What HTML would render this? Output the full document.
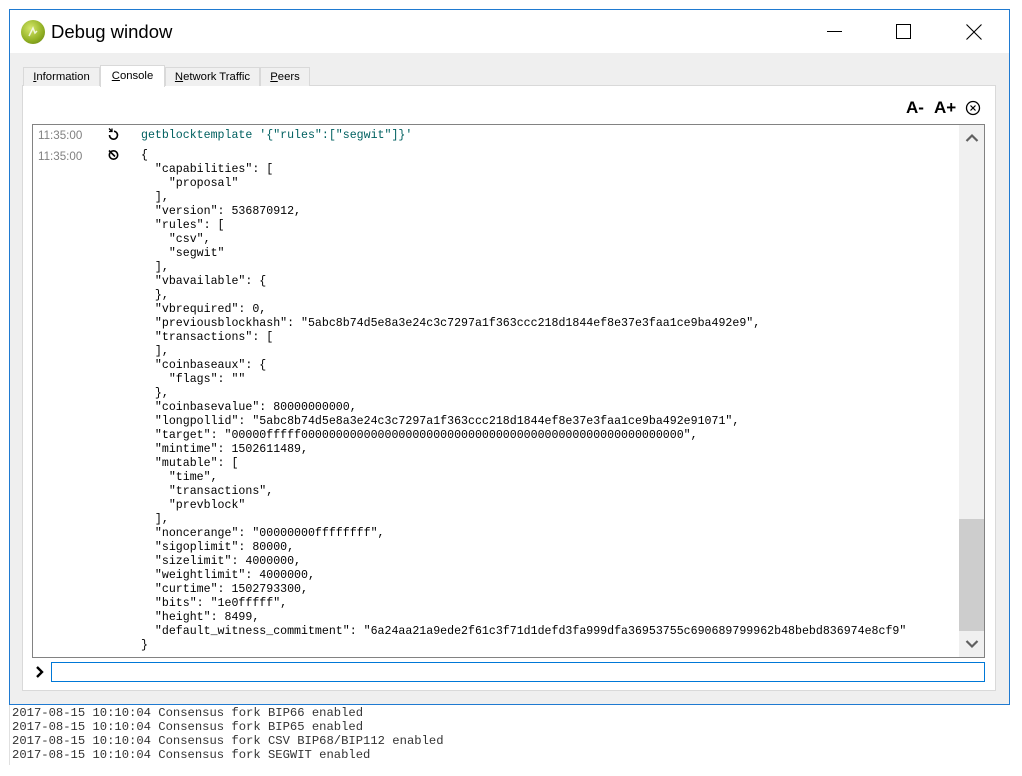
<!DOCTYPE html>
<html><head><meta charset="utf-8"><style>
*{margin:0;padding:0;box-sizing:border-box}
body{width:1022px;height:776px;background:#fff;position:relative;overflow:hidden;font-family:"Liberation Sans",sans-serif}
.abs{position:absolute}
pre{font-family:"Liberation Mono",monospace;font-size:11.6px;line-height:14px;color:#000}
.tab{position:absolute;top:67px;height:19px;border:1px solid #d9d9d9;border-bottom:none;background:#f0f0f0;font-size:11.3px;line-height:18px;text-align:center;color:#000}
</style></head><body>
<div class="abs" style="left:9px;top:9px;width:1001px;height:696px;border:1px solid #1f7ad1;background:#efefef"></div>
<div class="abs" style="left:10px;top:10px;width:999px;height:43px;background:#fff"></div>
<div class="abs" style="left:21px;top:20px;width:24px;height:24px;border-radius:50%;background:radial-gradient(circle at 40% 35%,#d6e86a,#8fae22 60%,#5f7a10)"></div>
<svg class="abs" style="left:21px;top:20px" width="24" height="24"><path d="M8 16 L12 8 L14 13 L16 11" stroke="#fff" stroke-width="1.5" fill="none" opacity=".8"/></svg>
<div class="abs" style="left:51px;top:21px;font-size:18.5px;color:#000">Debug window</div>
<div class="abs" style="left:827px;top:31px;width:15px;height:1px;background:#000"></div>
<div class="abs" style="left:896px;top:24px;width:15px;height:15px;border:1px solid #000"></div>
<svg class="abs" style="left:966px;top:24px" width="16" height="16"><path d="M0.5 0.5L15.5 15.5M15.5 0.5L0.5 15.5" stroke="#000" stroke-width="1.1"/></svg>
<div class="abs" style="left:22px;top:85px;width:974px;height:606px;border:1px solid #d9d9d9;background:#fff"></div>
<div class="tab" style="left:23px;width:77px"><u>I</u>nformation</div>
<div class="tab" style="left:100px;top:65px;height:22px;width:65px;background:#fff;line-height:20px"><u>C</u>onsole</div>
<div class="tab" style="left:165px;width:95px"><u>N</u>etwork Traffic</div>
<div class="tab" style="left:260px;width:50px"><u>P</u>eers</div>
<div class="abs" style="left:906px;top:98px;font-size:17px;font-weight:bold">A-</div>
<div class="abs" style="left:934px;top:98px;font-size:17px;font-weight:bold">A+</div>
<svg class="abs" style="left:965px;top:100px" width="16" height="16"><circle cx="8" cy="8" r="6.5" stroke="#000" stroke-width="1.3" fill="none"/><path d="M5.5 5.5L10.5 10.5M10.5 5.5L5.5 10.5" stroke="#000" stroke-width="1.2"/></svg>
<div class="abs" style="left:32px;top:124px;width:953px;height:534px;border:1px solid #828282;background:#fff;overflow:hidden">
  <div class="abs" style="left:926px;top:0;width:25px;height:532px;background:#f0f0f0"></div>
  <div class="abs" style="left:926px;top:394px;width:25px;height:112px;background:#cdcdcd"></div>
  <svg class="abs" style="left:932px;top:8px" width="14" height="10"><path d="M1.5 8L7 2.5L12.5 8" stroke="#606060" stroke-width="2.2" fill="none"/></svg>
  <svg class="abs" style="left:932px;top:514px" width="14" height="10"><path d="M1.5 2L7 7.5L12.5 2" stroke="#606060" stroke-width="2.2" fill="none"/></svg>
</div>
<div class="abs" style="left:38px;top:129px;font-size:11.6px;color:#808080">11:35:00</div>
<div class="abs" style="left:38px;top:150px;font-size:11.6px;color:#808080">11:35:00</div>
<svg class="abs" style="left:106px;top:127px" width="14" height="14"><path d="M3 1.5L6 4.5M6 1.5v3h-3" stroke="#000" stroke-width="1.3" fill="none"/><path d="M8 4.2A4 4 0 1 1 3.5 8" stroke="#000" stroke-width="1.6" fill="none"/></svg>
<svg class="abs" style="left:107px;top:148px" width="14" height="14"><circle cx="6.5" cy="7" r="4.2" stroke="#000" stroke-width="1.6" fill="none"/><path d="M2 2.5L8 8.5" stroke="#000" stroke-width="1.6"/></svg>
<pre class="abs" style="left:141px;top:129px;color:#006060">getblocktemplate '{"rules":["segwit"]}'</pre>
<pre class="abs" style="left:141px;top:149px">{
  "capabilities": [
    "proposal"
  ],
  "version": 536870912,
  "rules": [
    "csv",
    "segwit"
  ],
  "vbavailable": {
  },
  "vbrequired": 0,
  "previousblockhash": "5abc8b74d5e8a3e24c3c7297a1f363ccc218d1844ef8e37e3faa1ce9ba492e9",
  "transactions": [
  ],
  "coinbaseaux": {
    "flags": ""
  },
  "coinbasevalue": 80000000000,
  "longpollid": "5abc8b74d5e8a3e24c3c7297a1f363ccc218d1844ef8e37e3faa1ce9ba492e91071",
  "target": "00000fffff0000000000000000000000000000000000000000000000000000000",
  "mintime": 1502611489,
  "mutable": [
    "time",
    "transactions",
    "prevblock"
  ],
  "noncerange": "00000000ffffffff",
  "sigoplimit": 80000,
  "sizelimit": 4000000,
  "weightlimit": 4000000,
  "curtime": 1502793300,
  "bits": "1e0fffff",
  "height": 8499,
  "default_witness_commitment": "6a24aa21a9ede2f61c3f71d1defd3fa999dfa36953755c690689799962b48bebd836974e8cf9"
}</pre>
<svg class="abs" style="left:35px;top:665px" width="10" height="14"><path d="M2 2L7 7L2 12" stroke="#000" stroke-width="2.4" fill="none"/></svg>
<div class="abs" style="left:51px;top:662px;width:934px;height:20px;border:1px solid #0078d7;background:#fff"></div>
<div class="abs" style="left:9px;top:705px;width:1px;height:60px;background:#e0e0e0"></div>
<pre class="abs" style="left:12px;top:706px;color:#333;font-size:12.2px">2017-08-15 10:10:04 Consensus fork BIP66 enabled
2017-08-15 10:10:04 Consensus fork BIP65 enabled
2017-08-15 10:10:04 Consensus fork CSV BIP68/BIP112 enabled
2017-08-15 10:10:04 Consensus fork SEGWIT enabled</pre>
</body></html>
